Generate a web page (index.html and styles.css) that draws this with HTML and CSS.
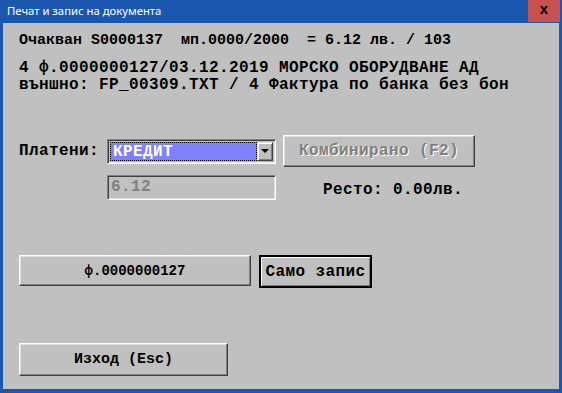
FILE: index.html
```html
<!DOCTYPE html>
<html>
    <head>
        <meta charset="utf-8">
        <title>Печат и запис на документа</title>
        <link rel="stylesheet" href="styles.css">
    </head>
    <body>
    <div class="window">
        <div class="titlebar">
            <span class="title">Печат и запис на документа</span>
            <span class="close">x</span>
        </div>
        <div class="content">
            <div class="line-small">Очакван S0000137  мп.0000/2000  = 6.12 лв. / 103</div>
            <div class="lines">
                <div>4 ф.0000000127/03.12.2019 МОРСКО ОБОРУДВАНЕ АД</div>
                <div>външно: FP_00309.TXT / 4 Фактура по банка без бон</div>
            </div>

            <div class="pay-row">
                <span class="label">Платени:</span>
                <div class="combo">
                    <div class="combo-value">КРЕДИТ</div>
                    <div class="combo-btn"><span class="arrow"></span></div>
                </div>
                <button class="btn btn-combined" disabled>Комбинирано (F2)</button>
            </div>
            <div class="amount-row">
                <div class="field">6.12</div>
                <span class="change">Ресто: 0.00лв.</span>
            </div>

            <div class="action-row">
                <button class="btn btn-invoice">ф.0000000127</button>
                <button class="btn btn-default">Само запис</button>
            </div>

            <button class="btn btn-exit">Изход (Esc)</button>
        </div>
    </div>
    </body>
</html>
```

FILE: styles.css
```css
body, html {
    height: 100%;
    margin: 0;
    padding: 0;
}
body {
    font-family: "Liberation Mono", "Courier New", monospace;
    font-weight: bold;
    color: #000;
}
.window {
    width: 562px;
    height: 393px;
    box-sizing: border-box;
    background: #1b57ae;
    padding: 0 3px 4px 3px;
    display: flex;
    flex-direction: column;
}
.titlebar {
    height: 23px;
    display: flex;
    align-items: flex-start;
    justify-content: space-between;
    margin: 0 -3px;
}
.title {
    font-family: "Noto Sans", sans-serif;
    font-weight: normal;
    font-size: 11.3px;
    color: #fff;
    padding: 3px 0 0 7px;
}
.close {
    width: 32px;
    height: 22px;
    margin-right: 2px;
    background: #c75050;
    font-family: "Liberation Sans", Arial, sans-serif;
    font-size: 15px;
    line-height: 18px;
    text-align: center;
}
.content {
    flex: 1;
    background: #c0c0c0;
    padding: 9px 0 0 16px;
}
.line-small, .lines div {
    white-space: pre;
}
.line-small {
    font-size: 15px;
    line-height: 17px;
}
.lines {
    margin-top: 11px;
    font-size: 16px;
    line-height: 16.5px;
    letter-spacing: 0.4px;
}
.pay-row {
    margin-top: 42px;
    display: flex;
    align-items: center;
}
.label {
    width: 88px;
    font-size: 16px;
    letter-spacing: 0.4px;
}
.combo {
    width: 169px;
    height: 25px;
    box-sizing: border-box;
    display: flex;
    padding: 2px;
    border: 1px solid;
    border-color: #808080 #fff #fff #808080;
    box-shadow: inset 1px 1px #404040, inset -1px -1px #dfdfdf;
}
.combo-value {
    flex: 1;
    background: #8080ff;
    color: #fff;
    font-size: 16px;
    letter-spacing: 0.4px;
    line-height: 18px;
    padding-left: 2px;
    border: 1px dotted #000;
}
.combo-btn {
    width: 16px;
    box-sizing: border-box;
    background: #c0c0c0;
    border: 1px solid;
    border-color: #dfdfdf #404040 #404040 #dfdfdf;
    box-shadow: inset 1px 1px #fff, inset -1px -1px #808080;
    display: flex;
    align-items: center;
    justify-content: center;
}
.arrow {
    width: 0;
    height: 0;
    border-left: 4px solid transparent;
    border-right: 4px solid transparent;
    border-top: 4px solid #000;
}
.btn {
    font-family: "Liberation Mono", "Courier New", monospace;
    font-weight: bold;
    background: #c0c0c0;
    color: #000;
    padding: 0;
    box-sizing: border-box;
    border: 1px solid;
    border-color: #fff #404040 #404040 #fff;
    box-shadow: inset -1px -1px #808080, inset 1px 1px #dfdfdf;
}
.btn-combined {
    margin-left: 7px;
    width: 192px;
    height: 32px;
    font-size: 16px;
    letter-spacing: 0.4px;
}
.btn[disabled] {
    color: #808080;
    text-shadow: 1px 1px #fff;
}
.amount-row {
    margin-top: 8px;
    display: flex;
    align-items: center;
}
.field {
    margin-left: 88px;
    width: 169px;
    height: 25px;
    box-sizing: border-box;
    border: 1px solid;
    border-color: #808080 #fff #fff #808080;
    box-shadow: inset 1px 1px #404040, inset -1px -1px #dfdfdf;
    color: #808080;
    font-size: 16px;
    letter-spacing: 0.4px;
    line-height: 22px;
    padding-left: 3px;
}
.change {
    margin-left: 47px;
    margin-top: 4px;
    font-size: 16px;
    letter-spacing: 0.4px;
}
.action-row {
    margin-top: 55px;
    display: flex;
    align-items: flex-start;
}
.btn-invoice {
    width: 232px;
    height: 31px;
    font-size: 14px;
}
.btn-default {
    margin-left: 8px;
    width: 113px;
    height: 33px;
    font-size: 16px;
    letter-spacing: 0.4px;
    border: 2px solid #000;
    box-shadow: inset 1px 1px #fff, inset -1px -1px #808080;
}
.btn-exit {
    display: block;
    margin-top: 55px;
    width: 209px;
    height: 33px;
    font-size: 15px;
}
```
